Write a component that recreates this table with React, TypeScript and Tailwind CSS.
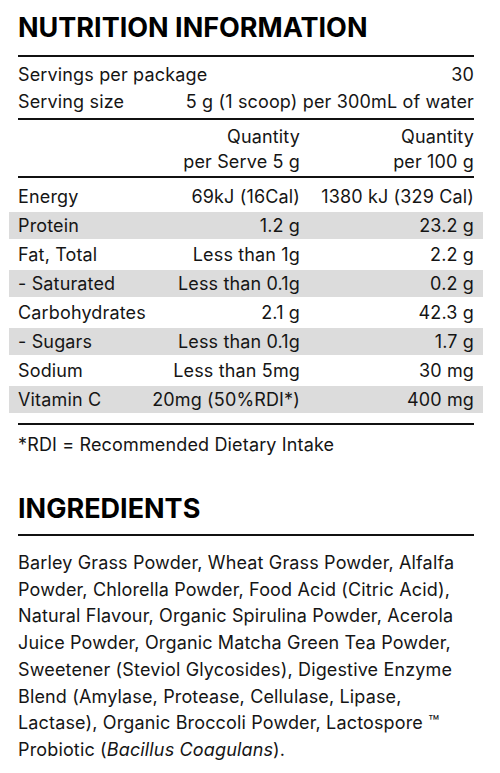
const ROWS: { label: string; serve: string; per100: string }[] = [
  { label: "Energy", serve: "69kJ (16Cal)", per100: "1380 kJ (329 Cal)" },
  { label: "Protein", serve: "1.2 g", per100: "23.2 g" },
  { label: "Fat, Total", serve: "Less than 1g", per100: "2.2 g" },
  { label: "- Saturated", serve: "Less than 0.1g", per100: "0.2 g" },
  { label: "Carbohydrates", serve: "2.1 g", per100: "42.3 g" },
  { label: "- Sugars", serve: "Less than 0.1g", per100: "1.7 g" },
  { label: "Sodium", serve: "Less than 5mg", per100: "30 mg" },
  { label: "Vitamin C", serve: "20mg (50%RDI*)", per100: "400 mg" },
];

const INGREDIENT_LINES = [
  "Barley Grass Powder, Wheat Grass Powder, Alfalfa",
  "Powder, Chlorella Powder, Food Acid (Citric Acid),",
  "Natural Flavour, Organic Spirulina Powder, Acerola",
  "Juice Powder, Organic Matcha Green Tea Powder,",
  "Sweetener (Steviol Glycosides), Digestive Enzyme",
  "Blend (Amylase, Protease, Cellulase, Lipase,",
  "Lactase), Organic Broccoli Powder, Lactospore \u2122",
];

function Rule() {
  return <div className="h-[2px] bg-[#111]" />;
}

export default function App() {
  return (
    <div className="min-h-[773px] bg-white pl-[18px] pr-[26px] text-[18px] tracking-[0.15px] text-[#151515] [font-family:Inter,'Open_Sans',sans-serif]">
      <h1 className="pt-[14px] text-[27px] leading-[28px] font-bold tracking-normal text-black">
        NUTRITION INFORMATION
      </h1>

      <div className="mt-[13px]">
        <Rule />
      </div>

      <div className="pt-[4px] pb-[3px] leading-[27px]">
        <div className="flex justify-between">
          <span>Servings per package</span>
          <span>30</span>
        </div>
        <div className="flex justify-between">
          <span>Serving size</span>
          <span>5 g (1 scoop) per 300mL of water</span>
        </div>
      </div>

      <Rule />

      <div className="grid grid-cols-[1fr_150px_174px] pt-[4px] pb-[2px] text-right leading-[25px]">
        <div />
        <div>
          Quantity
          <br />
          per Serve 5 g
        </div>
        <div>
          Quantity
          <br />
          per 100 g
        </div>
      </div>

      <Rule />

      <div className="flex flex-col gap-[2px] pt-[5px] pb-[1px]">
        {ROWS.map((r, i) => (
          <div
            key={r.label}
            className={
              "-mx-[9px] grid h-[27px] grid-cols-[1fr_150px_174px] items-center whitespace-nowrap px-[9px] " +
              (i % 2 === 1 ? "bg-[#dcdcdc]" : "")
            }
          >
            <span>{r.label}</span>
            <span className="text-right">{r.serve}</span>
            <span className="text-right">{r.per100}</span>
          </div>
        ))}
      </div>

      <div className="mt-[9px]">
        <Rule />
      </div>

      <p className="pt-[6px] leading-[27px]">*RDI = Recommended Dietary Intake</p>

      <h2 className="mt-[37px] text-[27px] leading-[28px] font-bold tracking-normal text-black">INGREDIENTS</h2>

      <div className="mt-[11px]">
        <Rule />
      </div>

      <p className="pt-[14px] leading-[26.7px] whitespace-nowrap">
        {INGREDIENT_LINES.map((l) => (
          <span key={l}>
            {l}
            <br />
          </span>
        ))}
        Probiotic (<em>Bacillus Coagulans</em>).
      </p>
    </div>
  );
}
